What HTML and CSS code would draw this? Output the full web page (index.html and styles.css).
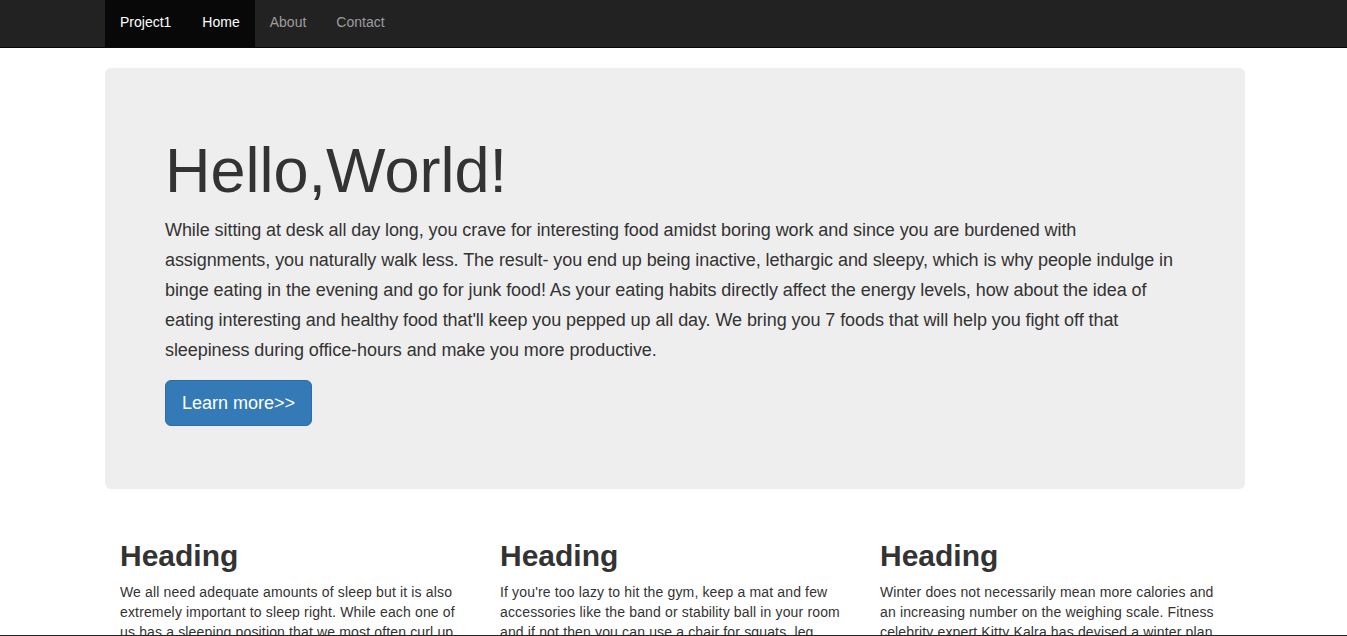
FILE: index.html
```html
<!DOCTYPE html>
<html lang="en">
<head>
<meta charset="utf-8">
<title>Project1</title>
<link rel="stylesheet" href="styles.css">
</head>
<body>
<nav class="navbar">
  <div class="container nav-inner">
    <a class="brand" href="#">Project1</a>
    <ul class="nav">
      <li class="active"><a href="#">Home</a></li>
      <li><a href="#">About</a></li>
      <li><a href="#">Contact</a></li>
    </ul>
  </div>
</nav>

<div class="container">
  <div class="jumbotron">
    <h1>Hello,World!</h1>
    <p>While sitting at desk all day long, you crave for interesting food amidst boring work and since you are burdened with assignments, you naturally walk less. The result- you end up being inactive, lethargic and sleepy, which is why people indulge in binge eating in the evening and go for junk food! As your eating habits directly affect the energy levels, how about the idea of eating interesting and healthy food that'll keep you pepped up all day. We bring you 7 foods that will help you fight off that sleepiness during office-hours and make you more productive.</p>
    <div class="actions"><a class="btn" href="#">Learn more&gt;&gt;</a></div>
  </div>

  <div class="row">
    <div class="col">
      <h2>Heading</h2>
      <p>We all need adequate amounts of sleep but it is also extremely important to sleep right. While each one of us has a sleeping position that we most often curl up in, not every position is good for the body and some of them can even cause back and neck pain.</p>
    </div>
    <div class="col">
      <h2>Heading</h2>
      <p>If you're too lazy to hit the gym, keep a mat and few accessories like the band or stability ball in your room and if not then you can use a chair for squats, leg raises and dips to stay fit without ever stepping out of the house.</p>
    </div>
    <div class="col">
      <h2>Heading</h2>
      <p>Winter does not necessarily mean more calories and an increasing number on the weighing scale. Fitness celebrity expert Kitty Kalra has devised a winter plan that keeps you warm, healthy and full of energy all season long.</p>
    </div>
  </div>
</div>
<div class="bottom-edge"></div>
</body>
</html>
```

FILE: styles.css
```css
* { box-sizing: border-box; }

html, body {
  margin: 0;
  padding: 0;
}

body {
  font-family: "Liberation Sans", Arial, Helvetica, sans-serif;
  font-size: 14px;
  line-height: 20px;
  color: #333;
  background: #fff;
}

a { text-decoration: none; }

.container {
  width: 1170px;
  margin-left: calc((100% - 1167px) / 2);
  padding: 0 15px;
}

.navbar {
  background: #222;
  border-bottom: 1px solid #080808;
  height: 48px;
}

.nav-inner {
  display: flex;
  height: 47px;
}

.brand {
  display: block;
  padding: 12px 16px 15px 15px;
  height: 47px;
  font-size: 14px;
  line-height: 20px;
  color: #fff;
  background: #080808;
}

.nav {
  display: flex;
  list-style: none;
  margin: 0;
  padding: 0;
}

.nav a {
  display: block;
  padding: 12px 15px 15px;
  height: 47px;
  line-height: 20px;
  color: #9d9d9d;
}

.nav .active a {
  color: #fff;
  background: #080808;
}

.jumbotron {
  margin-top: 20px;
  margin-bottom: 30px;
  padding: 48px 60px;
  background: #eee;
  border-radius: 6px;
}

.jumbotron h1 {
  margin: 20px 0 10px;
  font-size: 63px;
  line-height: 1.1;
  font-weight: 400;
  color: #333;
}

.jumbotron p {
  margin: 0 0 15px;
  font-size: 18px;
  line-height: 30px;
  letter-spacing: -0.07px;
}

.actions {
  margin-bottom: 15px;
}

.btn {
  display: inline-block;
  padding: 10px 16px;
  font-size: 18px;
  line-height: 24px;
  color: #fff;
  background: #337ab7;
  border: 1px solid #2e6da4;
  border-radius: 6px;
}

.row {
  display: flex;
}

.col {
  width: 380px;
  padding: 0 15px;
}

.col h2 {
  margin: 20px 0 10px;
  font-size: 30px;
  line-height: 33px;
  font-weight: 700;
}

.col p {
  margin: 0 0 10px;
  letter-spacing: 0.15px;
}

.bottom-edge {
  position: fixed;
  left: 0;
  right: 0;
  bottom: 0;
  height: 1px;
  background: #222;
}
```
